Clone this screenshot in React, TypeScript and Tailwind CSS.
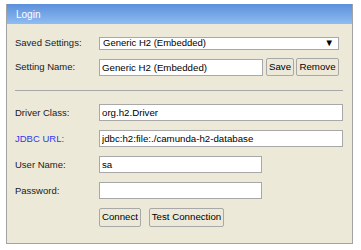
import React from 'react';

const font = { fontFamily: '"Liberation Sans", Arial, sans-serif' };

const Label: React.FC<{ text: string; link?: boolean }> = ({ text, link }) => (
    <div className={`w-[84px] shrink-0 text-[9.5px] ${link ? 'text-[#3535ee]' : 'text-[#1a1a1a]'}`}>{text}</div>
);

const Field: React.FC<{ value: string; width: string }> = ({ value, width }) => (
    <input
        readOnly
        value={value}
        className={`${width} h-[17px] border border-[#a8a8a8] bg-white px-[2px] text-[9.7px] text-black outline-none`}
        style={font}
    />
);

const Btn: React.FC<{ text: string; width: string; height?: string }> = ({ text, width, height = 'h-[19px]' }) => (
    <button
        className={`${width} ${height} shrink-0 border border-[#a8a8a8] rounded-[2px] bg-[#ece9d8] text-[9.7px] text-black flex items-center justify-center`}
        style={font}
    >
        {text}
    </button>
);

export default function App() {
    return (
        <div className="w-[361px] h-[250px] bg-white pt-[4px] pl-[6px]" style={font}>
            <div className="w-[347px] h-[240px] border border-[#a3a3a3] border-t-0 bg-[#ece9d8]">
                <div className="h-[20px] bg-gradient-to-b from-[#5b8fda] to-[#8fbdf2] pl-[9px] flex items-center text-white text-[10px]">
                    Login
                </div>

                <div className="pl-[8px] pt-[12px]">
                    <div className="flex items-center">
                        <Label text="Saved Settings:" />
                        <div className="w-[240px] h-[13px] border border-[#a8a8a8] bg-white flex items-center justify-between pl-[3px] pr-[4px] text-[9.5px] text-black">
                            <span>Generic H2 (Embedded)</span>
                            <span className="text-[9.5px] leading-none">▼</span>
                        </div>
                    </div>

                    <div className="flex items-center mt-[8px]">
                        <Label text="Setting Name:" />
                        <Field value="Generic H2 (Embedded)" width="w-[164px]" />
                        <div className="flex gap-[2px] ml-[3px]">
                            <Btn text="Save" width="w-[28px]" height="h-[18px]" />
                            <Btn text="Remove" width="w-[43px]" height="h-[18px]" />
                        </div>
                    </div>

                    <div className="w-[328px] border-t border-[#a8a8a8] mt-[14px]" />

                    <div className="flex flex-col gap-[9px] mt-[13px]">
                        <div className="flex items-center">
                            <Label text="Driver Class:" />
                            <Field value="org.h2.Driver" width="w-[244px]" />
                        </div>
                        <div className="flex items-center">
                            <Label text="JDBC URL:" link />
                            <Field value="jdbc:h2:file:./camunda-h2-database" width="w-[244px]" />
                        </div>
                        <div className="flex items-center">
                            <Label text="User Name:" />
                            <Field value="sa" width="w-[163px]" />
                        </div>
                        <div className="flex items-center">
                            <Label text="Password:" />
                            <Field value="" width="w-[163px]" />
                        </div>
                        <div className="flex items-center">
                            <div className="w-[84px] shrink-0" />
                            <div className="flex gap-[8px]">
                                <Btn text="Connect" width="w-[42px]" />
                                <Btn text="Test Connection" width="w-[75px]" />
                            </div>
                        </div>
                    </div>
                </div>
            </div>
        </div>
    );
}
